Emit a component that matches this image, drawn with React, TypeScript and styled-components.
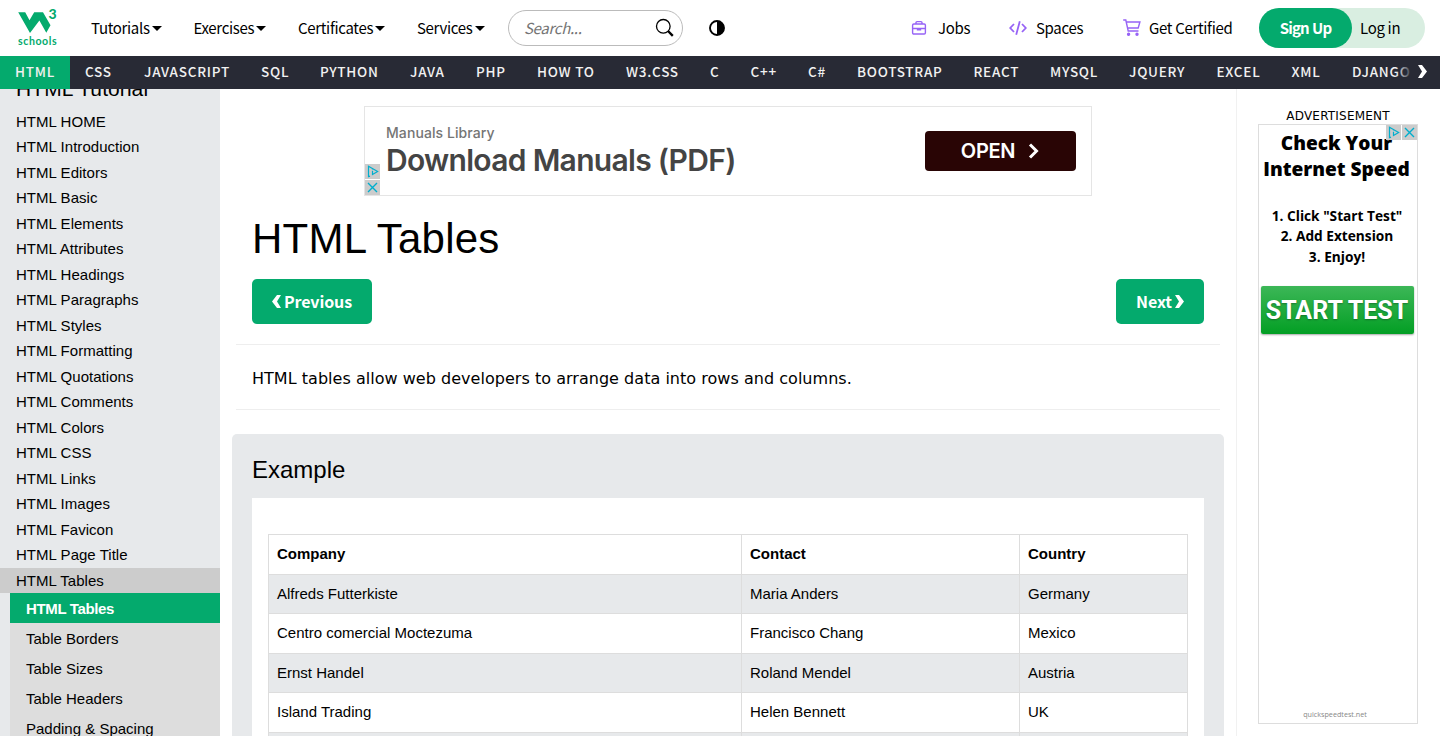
import React from 'react';
import styled, { createGlobalStyle } from 'styled-components';

const GlobalStyle = createGlobalStyle`
  *, *::before, *::after { box-sizing: border-box; }
  body { margin: 0; background: #fff; color: #000; overflow: hidden; font-family: 'DejaVu Sans', Verdana, sans-serif; }
  h1, h2, h3, p { margin: 0; padding: 0; font-weight: 400; }
  a { color: inherit; text-decoration: none; }
`;

const source = `'Source Sans Pro', 'Noto Sans CJK SC', sans-serif`;
const arial = `Arial, 'Liberation Sans', sans-serif`;

const Page = styled.div`
  height: 736px;
  display: flex;
  flex-direction: column;
  overflow: hidden;
`;

const TopBar = styled.header`
  height: 56px;
  flex: none;
  display: flex;
  align-items: center;
  padding: 0 15px 0 18px;
  font-family: ${source};
  font-size: 15px;
  letter-spacing: -0.32px;
`;

const LogoLink = styled.a`
  display: block;
  width: 73px;
  height: 56px;
  flex: none;
`;

const MenuItem = styled.a<{ $width: number }>`
  width: ${(p) => p.$width}px;
  flex: none;
  display: flex;
  align-items: center;
  gap: 2px;
  padding-bottom: 1px;
  white-space: nowrap;
`;

const Caret = styled.span`
  border: 5px solid transparent;
  border-top: 5px solid #000;
  border-bottom: 0;
  margin-top: 2px;
`;

const SearchBox = styled.div`
  width: 175px;
  height: 36px;
  flex: none;
  border: 1px solid #bbb;
  border-radius: 18px;
  padding: 0 7px 1px 15px;
  display: flex;
  align-items: center;
  justify-content: space-between;
  color: #757575;
  font-style: italic;
  svg { margin-top: 1px; }
`;

const ThemeButton = styled.a`
  display: flex;
  margin-left: 26px;
`;

const Spacer = styled.div`
  flex: 1;
`;

const ToolLink = styled.a<{ $width: number; $gap: number }>`
  width: ${(p) => p.$width}px;
  flex: none;
  display: flex;
  align-items: center;
  gap: ${(p) => p.$gap}px;
  padding-bottom: 1px;
  white-space: nowrap;
  svg { flex: none; }
`;

const Account = styled.div`
  display: flex;
  width: 166px;
  height: 40px;
  border-radius: 20px;
  background: #d9eee1;
`;

const SignUp = styled.a`
  width: 93px;
  border-radius: 20px;
  background: #04aa6d;
  color: #fff;
  font-weight: 700;
  letter-spacing: -0.85px;
  word-spacing: 0.6px;
  padding-bottom: 1px;
  display: flex;
  align-items: center;
  justify-content: center;
`;

const LogIn = styled.a`
  display: flex;
  align-items: center;
  padding: 0 0 1px 8px;
`;

const SubjectBar = styled.nav`
  height: 33px;
  flex: none;
  display: flex;
  position: relative;
  z-index: 1;
  background: #282a35;
  overflow: hidden;
`;

const Subject = styled.a<{ $width: number; $active?: boolean }>`
  width: ${(p) => p.$width}px;
  flex: none;
  padding-left: 15px;
  line-height: 31px;
  font-family: ${source};
  font-size: 13.5px;
  font-weight: 500;
  letter-spacing: 0.75px;
  white-space: nowrap;
  color: #f1f1f1;
  background: ${(p) => (p.$active ? '#04aa6d' : 'transparent')};
`;

const ScrollRight = styled.a`
  position: absolute;
  right: 0;
  top: 0;
  width: 44px;
  height: 33px;
  padding: 0 13px 2px 0;
  display: flex;
  align-items: center;
  justify-content: flex-end;
  background: linear-gradient(to right, rgba(40, 42, 53, 0), #282a35 38%);
`;

const Body = styled.div`
  flex: 1;
  min-height: 0;
  display: flex;
`;

const Sidebar = styled.aside`
  width: 220px;
  flex: none;
  background: #e7e9eb;
  overflow: hidden;
  font-family: ${arial};
  font-size: 15px;
`;

const SideHeading = styled.h2`
  height: 31.5px;
  margin-top: -12px;
  padding-left: 16px;
  font-size: 21px;
  line-height: 24px;
  letter-spacing: 0.08px;
`;

const SideLink = styled.a<{ $open?: boolean }>`
  display: block;
  height: 25.5px;
  padding-left: 16px;
  line-height: 25.5px;
  letter-spacing: 0.03px;
  background: ${(p) => (p.$open ? '#ccc' : 'transparent')};
`;

const SubMenu = styled.div`
  margin-left: 10px;
  background: #ddd;
`;

const SubLink = styled.a<{ $active?: boolean }>`
  display: block;
  height: 30px;
  padding-left: 16px;
  line-height: 31px;
  color: ${(p) => (p.$active ? '#fff' : '#000')};
  font-weight: ${(p) => (p.$active ? 700 : 400)};
  letter-spacing: ${(p) => (p.$active ? '-0.35px' : '0')};
  background: ${(p) => (p.$active ? '#04aa6d' : 'transparent')};
`;

const Main = styled.main`
  width: 1016px;
  flex: none;
  padding: 17px 12px 0;
  overflow: hidden;
`;

const Banner = styled.div`
  position: relative;
  width: 728px;
  height: 90px;
  margin: 0 auto;
  padding: 0 15px 0 21px;
  border: 1px solid #e5e5e5;
  display: flex;
  align-items: center;
  justify-content: space-between;
  font-family: Inter, sans-serif;
`;

const BannerSource = styled.div`
  font-size: 14px;
  line-height: 18px;
  font-weight: 500;
  letter-spacing: 0.08px;
  color: #757575;
`;

const BannerTitle = styled.div`
  font-size: 30px;
  line-height: 36px;
  font-weight: 600;
  letter-spacing: -0.7px;
  color: #444;
`;

const OpenButton = styled.a`
  width: 151px;
  height: 40px;
  border-radius: 4px;
  background: #290505;
  color: #fff;
  font-size: 20px;
  font-weight: 600;
  letter-spacing: -0.3px;
  display: flex;
  align-items: center;
  justify-content: center;
  gap: 13px;
`;

const AdChoices = styled.div<{ $vertical?: boolean }>`
  position: absolute;
  display: flex;
  flex-direction: ${(p) => (p.$vertical ? 'column' : 'row')};
  gap: 1px;
  ${(p) => (p.$vertical ? 'left: 0; bottom: 0;' : 'right: 0; top: 0;')}
  svg { display: block; background: #ccc; }
`;

const Title = styled.h1`
  margin: 18px 20px 0;
  font: 400 42px/50px ${arial};
  letter-spacing: 0.22px;
`;

const Pager = styled.div`
  margin: 15px 20px 20px;
  display: flex;
  justify-content: space-between;
`;

const PagerButton = styled.a<{ $width: number }>`
  width: ${(p) => p.$width}px;
  height: 45px;
  border-radius: 5px;
  background: #04aa6d;
  color: #fff;
  display: flex;
  align-items: center;
  justify-content: center;
  gap: 3px;
  padding-bottom: 1px;
  font: 700 16px/24px ${source};
  letter-spacing: -0.1px;
`;

const Rule = styled.hr`
  height: 1px;
  margin: 0 4px;
  border: 0;
  background: #eee;
`;

const Intro = styled.p`
  margin: 21px 20px 18px;
  font-size: 16px;
  line-height: 25px;
  letter-spacing: 0.03px;
  white-space: nowrap;
`;

const Example = styled.section`
  margin-top: 24px;
  padding: 20px 20px 0;
  height: 400px;
  border-radius: 5px;
  background: #e7e9eb;
`;

const ExampleTitle = styled.h3`
  height: 44px;
  font: 400 24px/32px ${arial};
`;

const TablePanel = styled.div`
  height: 400px;
  padding: 36px 16px;
  background: #fff;
`;

const Table = styled.table`
  width: 920px;
  table-layout: fixed;
  border-collapse: collapse;
  font: 15px/22.5px ${arial};
  th, td { height: 39.5px; padding: 8px; border: 1px solid #ddd; text-align: left; }
  tbody tr:nth-child(odd) { background: #e7e9eb; }
`;

const HeadCell = styled.th<{ $width: number }>`
  width: ${(p) => p.$width}px;
`;

const Aside = styled.aside`
  flex: 1;
  border-left: 1px solid #f1f1f1;
  padding: 19px 22px 0 21px;
`;

const AdLabel = styled.div`
  font-size: 12px;
  line-height: 16px;
  letter-spacing: 0.2px;
  text-align: center;
  white-space: nowrap;
`;

const Tower = styled.div`
  position: relative;
  width: 160px;
  height: 600px;
  border: 1px solid #ddd;
  display: flex;
  flex-direction: column;
  align-items: center;
  text-align: center;
  white-space: nowrap;
  font-family: 'Open Sans', sans-serif;
  font-weight: 700;
`;

const TowerHead = styled.div`
  margin: 5px 3px 0 0;
  font-size: 19.1px;
  line-height: 26px;
  font-weight: 800;
`;

const TowerSteps = styled.div`
  margin: 24px 2px 0 0;
  font-size: 13.7px;
  line-height: 20.3px;
`;

const StartButton = styled.a`
  width: 153px;
  height: 48px;
  margin: 19px 2px 0 0;
  border-radius: 2px;
  background: linear-gradient(#3cb757, #039f24);
  box-shadow: 0 1px 2px rgba(0, 0, 0, 0.35);
  color: #fff;
  font: 700 25px/49px Roboto, sans-serif;
  text-shadow: 0 1px 2px rgba(0, 0, 0, 0.3);
`;

const TowerFoot = styled.div`
  margin: auto 6px 3px 0;
  font-size: 7.2px;
  line-height: 12px;
  font-weight: 400;
  color: #888;
`;

const Logo = () => (
  <svg width="42" height="56" viewBox="0 0 42 56" fill="#04aa6d">
    <path d="M.2 12.3h7l4.3 8 4.7-8h8.8l7.5 13-4.2 7.4-6.9-12.2L12 33z" />
    <text x="30.4" y="18.9" fontFamily="Lato" fontWeight="900" fontSize="14" letterSpacing="0">3</text>
    <text x="0" y="44.6" fontFamily="Lato" fontWeight="700" fontSize="10.6" textLength="38.6" letterSpacing="0">schools</text>
  </svg>
);

const Chevron = ({ left }: { left?: boolean }) => (
  <svg width="9" height="13" viewBox="0 0 9 13" fill="#fff">
    <path transform={left ? 'translate(9 0) scale(-1 1)' : undefined} d="M0 0h4L9 6.5 4 13H0l4-6.5z" />
  </svg>
);

const PlayMark = () => (
  <svg width="15" height="15" viewBox="0 0 15 15" fill="none" stroke="#00aecd" strokeWidth="1.2">
    <path d="M5 12.1l-1.5.6V2.3L12.6 7.5 7.5 10.5V6.8M7.5 4.7v.9" />
  </svg>
);

const CloseMark = () => (
  <svg width="15" height="15" viewBox="0 0 15 15" stroke="#00aecd" strokeWidth="1.4">
    <path d="M3 3l9 9M12 3l-9 9" />
  </svg>
);

const menu: [string, number][] = [['Tutorials', 102.5], ['Exercises', 104.5], ['Certificates', 119], ['Services', 91]];

const subjects: [string, number][] = [
  ['HTML', 70], ['CSS', 59], ['JAVASCRIPT', 117], ['SQL', 59], ['PYTHON', 90], ['JAVA', 66], ['PHP', 61],
  ['HOW TO', 89], ['W3.CSS', 84], ['C', 40.5], ['C++', 57.5], ['C#', 49], ['BOOTSTRAP', 116.5], ['REACT', 76.5],
  ['MYSQL', 79], ['JQUERY', 87.5], ['EXCEL', 75], ['XML', 60.5], ['DJANGO', 90],
];

const chapters = [
  'HOME', 'Introduction', 'Editors', 'Basic', 'Elements', 'Attributes', 'Headings', 'Paragraphs', 'Styles',
  'Formatting', 'Quotations', 'Comments', 'Colors', 'CSS', 'Links', 'Images', 'Favicon', 'Page Title', 'Tables',
];

const sections = ['HTML Tables', 'Table Borders', 'Table Sizes', 'Table Headers', 'Padding & Spacing'];

const rows = [
  ['Alfreds Futterkiste', 'Maria Anders', 'Germany'],
  ['Centro comercial Moctezuma', 'Francisco Chang', 'Mexico'],
  ['Ernst Handel', 'Roland Mendel', 'Austria'],
  ['Island Trading', 'Helen Bennett', 'UK'],
  ['', '', ''],
];

export default function App() {
  return (
    <Page>
      <GlobalStyle />
      <TopBar>
        <LogoLink><Logo /></LogoLink>
        {menu.map(([label, width]) => (
          <MenuItem key={label} $width={width}>{label}<Caret /></MenuItem>
        ))}
        <SearchBox>
          Search...
          <svg width="20" height="20" viewBox="0 0 20 20" fill="none" stroke="#000">
            <circle cx="8.3" cy="8.3" r="6.8" strokeWidth="1.3" />
            <path d="M13 13l4.8 4.8" strokeWidth="2.4" />
          </svg>
        </SearchBox>
        <ThemeButton>
          <svg width="16" height="16" viewBox="0 0 16 16">
            <circle cx="8" cy="8" r="7" fill="none" stroke="#000" strokeWidth="1.9" />
            <path d="M8 1a7 7 0 0 0 0 14z" transform="translate(16 0) scale(-1 1)" />
          </svg>
        </ThemeButton>
        <Spacer />
        <ToolLink $width={98} $gap={11}>
          <svg width="16" height="16" viewBox="0 0 16 16" fill="none" stroke="#9763f6" strokeWidth="1.4">
            <rect x="1.6" y="4" width="12.8" height="10" rx="1.2" />
            <path d="M5 4V2.6a1 1 0 0 1 1-1h4a1 1 0 0 1 1 1V4M1.6 8.5h12.8M6.5 8.5v1.3h3V8.5" />
          </svg>
          Jobs
        </ToolLink>
        <ToolLink $width={114} $gap={9}>
          <svg width="18" height="16" viewBox="0 0 18 16" fill="none" stroke="#9763f6" strokeWidth="1.8">
            <path d="M5 4L1.2 8 5 12M13 4l3.8 4-3.8 4M10.8 1.3L7.2 14.7" />
          </svg>
          Spaces
        </ToolLink>
        <ToolLink $width={136} $gap={8}>
          <svg width="18" height="17" viewBox="0 0 18 17" fill="none" stroke="#9763f6" strokeWidth="1.4">
            <path d="M.2 1h2.6l2.4 11h10.3M3.3 3h13.6l-1.7 6H4.6" />
            <circle cx="5.6" cy="15.2" r="1" fill="#9763f6" />
            <circle cx="14" cy="15.2" r="1" fill="#9763f6" />
          </svg>
          Get Certified
        </ToolLink>
        <Account>
          <SignUp>Sign Up</SignUp>
          <LogIn>Log in</LogIn>
        </Account>
      </TopBar>
      <SubjectBar>
        {subjects.map(([label, width], i) => (
          <Subject key={label} $width={width} $active={i === 0}>{label}</Subject>
        ))}
        <ScrollRight><Chevron /></ScrollRight>
      </SubjectBar>
      <Body>
        <Sidebar>
          <SideHeading>HTML Tutorial</SideHeading>
          {chapters.map((name) => (
            <SideLink key={name} $open={name === 'Tables'}>HTML {name}</SideLink>
          ))}
          <SubMenu>
            {sections.map((name, i) => (
              <SubLink key={name} $active={i === 0}>{name}</SubLink>
            ))}
          </SubMenu>
        </Sidebar>
        <Main>
          <Banner>
            <div>
              <BannerSource>Manuals Library</BannerSource>
              <BannerTitle>Download Manuals (PDF)</BannerTitle>
            </div>
            <OpenButton>
              OPEN
              <svg width="12" height="16" viewBox="0 0 12 16" fill="none" stroke="#fff" strokeWidth="3">
                <path d="M2 1.5L8.5 8 2 14.5" />
              </svg>
            </OpenButton>
            <AdChoices $vertical><PlayMark /><CloseMark /></AdChoices>
          </Banner>
          <Title>HTML Tables</Title>
          <Pager>
            <PagerButton $width={120}><Chevron left />Previous</PagerButton>
            <PagerButton $width={88}>Next<Chevron /></PagerButton>
          </Pager>
          <Rule />
          <Intro>HTML tables allow web developers to arrange data into rows and columns.</Intro>
          <Rule />
          <Example>
            <ExampleTitle>Example</ExampleTitle>
            <TablePanel>
              <Table>
                <thead>
                  <tr>
                    <HeadCell $width={473}>Company</HeadCell>
                    <HeadCell $width={278}>Contact</HeadCell>
                    <HeadCell $width={168}>Country</HeadCell>
                  </tr>
                </thead>
                <tbody>
                  {rows.map((cells, r) => (
                    <tr key={r}>{cells.map((cell, c) => <td key={c}>{cell}</td>)}</tr>
                  ))}
                </tbody>
              </Table>
            </TablePanel>
          </Example>
        </Main>
        <Aside>
          <AdLabel>ADVERTISEMENT</AdLabel>
          <Tower>
            <TowerHead>Check Your<br />Internet Speed</TowerHead>
            <TowerSteps>1. Click "Start Test"<br />2. Add Extension<br />3. Enjoy!</TowerSteps>
            <StartButton>START TEST</StartButton>
            <TowerFoot>quickspeedtest.net</TowerFoot>
            <AdChoices><PlayMark /><CloseMark /></AdChoices>
          </Tower>
        </Aside>
      </Body>
    </Page>
  );
}
